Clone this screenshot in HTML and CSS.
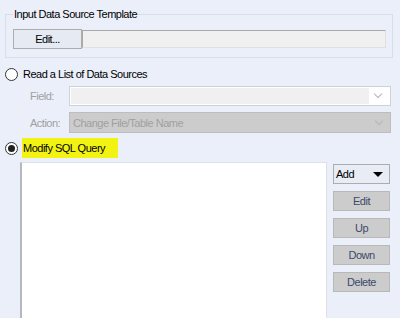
FILE: index.html
```html
<!DOCTYPE html>
<html>
<head>
  <title>Dynamic Input</title>
  <link rel="stylesheet" href="styles.css">
</head>
<body>
  <fieldset class="group">
    <legend>Input Data Source Template</legend>
    <div class="templateRow">
      <button type="button" class="editTemplate">Edit...</button>
      <div class="templatePath"></div>
    </div>
  </fieldset>

  <div class="option">
    <span class="radio"></span>
    <span class="optionLabel">Read a List of Data Sources</span>
  </div>

  <div class="fieldRow">
    <span class="fieldLabel">Field:</span>
    <div class="combo comboEmpty">
      <div class="comboText"></div>
      <span class="chevron"></span>
    </div>
  </div>
  <div class="fieldRow actionRow">
    <span class="fieldLabel">Action:</span>
    <div class="combo comboDisabled">
      <div class="comboText">Change File/Table Name</div>
      <span class="chevron"></span>
    </div>
  </div>

  <div class="option optionChecked">
    <span class="radio checked"></span>
    <span class="optionLabel highlight">Modify SQL Query</span>
  </div>

  <div class="queryArea">
    <div class="queryList"></div>
    <div class="queryButtons">
      <button type="button" class="addButton">Add <span class="caret"></span></button>
      <button type="button" class="sideButton">Edit</button>
      <button type="button" class="sideButton">Up</button>
      <button type="button" class="sideButton">Down</button>
      <button type="button" class="sideButton">Delete</button>
    </div>
  </div>
</body>
</html>
```

FILE: styles.css
```css
body {
  margin: 0;
  width: 400px;
  height: 318px;
  overflow: hidden;
  background-color: #ebeff9;
  font-family: 'Liberation Sans', Arial, sans-serif;
  font-size: 11px;
  letter-spacing: -0.5px;
  color: #000;
}

button {
  font-family: inherit;
  font-size: 11px;
  letter-spacing: -0.5px;
  margin: 0;
  padding: 0;
  cursor: default;
}

/* template group box */
.group {
  margin: 8px 7px 0 5px;
  padding: 0 6px 8px 7px;
  border: 1px solid #d9dde6;
}

.group legend {
  padding: 0 1px;
  line-height: 13px;
}

.templateRow {
  display: flex;
  margin-top: 8px;
}

.editTemplate {
  width: 69px;
  height: 20px;
  background-color: #e6eaf3;
  border: 1px solid #adadad;
  color: #000;
}

.templatePath {
  flex: 1;
  height: 16px;
  margin-top: 1px;
  background-color: #f0f0f0;
  border: 1px solid #a8a8a8;
  border-right-color: #e0e0e0;
  border-bottom-color: #e0e0e0;
}

/* radio options */
.option {
  display: flex;
  align-items: center;
  height: 20px;
  margin: 6px 0 0 5px;
}

.optionChecked {
  margin-top: 5px;
}

.radio {
  width: 11px;
  height: 11px;
  border: 1px solid #333;
  border-radius: 50%;
  background-color: #fff;
  position: relative;
  flex-shrink: 0;
}

.radio.checked::after {
  content: '';
  position: absolute;
  left: 2px;
  top: 2px;
  width: 7px;
  height: 7px;
  border-radius: 50%;
  background-color: #222;
}

.optionLabel {
  margin-left: 5px;
  line-height: 20px;
}

.highlight {
  background-color: #f2f213;
  padding: 0 13px 0 1px;
  margin-left: 4px;
}

/* field / action combos */
.fieldRow {
  display: flex;
  align-items: center;
  margin: 2px 9px 0 30px;
}

.actionRow {
  margin-top: 6px;
}

.fieldLabel {
  width: 39px;
  color: #a0a0a0;
}

.combo {
  flex: 1;
  display: flex;
  align-items: center;
  height: 18px;
  border: 1px solid #cfd2d8;
}

.comboEmpty {
  background-color: #fff;
  padding: 1px;
  height: 16px;
}

.comboEmpty .comboText {
  height: 16px;
  background-color: #f0f0f0;
}

.comboDisabled {
  height: 19px;
  background-color: #cccccc;
  border-color: #bdbdbd;
}

.comboText {
  flex: 1;
  padding-left: 3px;
  color: #a0a0a0;
}

.chevron {
  width: 5px;
  height: 5px;
  border-right: 1px solid #b5b5b5;
  border-bottom: 1px solid #b5b5b5;
  transform: rotate(45deg);
  margin: 0 8px 4px 6px;
}

/* sql query list (runs past the bottom of the window) */
.queryArea {
  display: flex;
  margin: 4px 0 0 20px;
}

.queryList {
  width: 304px;
  height: 155px;
  background-color: #fff;
  border-top: 1px solid #dde0e6;
  border-right: 1px solid #dde0e6;
  border-left: 2px solid #b5b8c0;
}

.queryButtons {
  display: flex;
  flex-direction: column;
  gap: 7px;
  margin: 2px 0 0 6px;
}

.addButton {
  width: 57px;
  height: 20px;
  display: flex;
  align-items: center;
  justify-content: space-between;
  padding: 0 5px 0 2px;
  background-color: #e8ecf5;
  border: 1px solid #adadad;
  color: #000;
}

.caret {
  width: 0;
  height: 0;
  border-left: 5px solid transparent;
  border-right: 5px solid transparent;
  border-top: 5px solid #000;
  margin-right: 1px;
}

.sideButton {
  width: 57px;
  height: 20px;
  background-color: #cccccc;
  border: 1px solid #b8b8b8;
  color: #3b4a6b;
}
```
